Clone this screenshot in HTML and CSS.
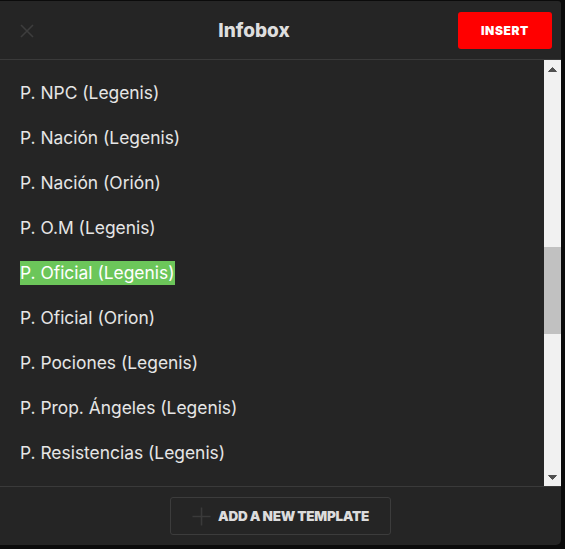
FILE: index.html
```html
<!DOCTYPE html>
<html>
<head>
<meta charset="utf-8">
<link rel="stylesheet" href="styles.css">
</head>
<body>
<div class="dialog">
  <div class="header">
    <div class="close">
      <svg width="14" height="14" viewBox="0 0 14 14"><path d="M1 1L13 13M13 1L1 13" stroke="#3d3d3d" stroke-width="1.6"/></svg>
    </div>
    <div class="title">Infobox</div>
    <button class="insert">INSERT</button>
  </div>
  <div class="body">
    <ul class="list">
      <li>P. NPC (Legenis)</li>
      <li>P. Nación (Legenis)</li>
      <li>P. Nación (Orión)</li>
      <li>P. O.M (Legenis)</li>
      <li><span class="sel">P. Oficial (Legenis)</span></li>
      <li>P. Oficial (Orion)</li>
      <li>P. Pociones (Legenis)</li>
      <li>P. Prop. Ángeles (Legenis)</li>
      <li>P. Resistencias (Legenis)</li>
    </ul>
    <div class="scrollbar">
      <div class="arrow"><svg width="9" height="6" viewBox="0 0 9 6"><path d="M0.5 5.5L4.5 1.5L8.5 5.5Z" fill="#505050" stroke="#505050"/></svg></div>
      <div class="track"><div class="thumb"></div></div>
      <div class="arrow"><svg width="9" height="6" viewBox="0 0 9 6"><path d="M0.5 0.5L4.5 4.5L8.5 0.5Z" fill="#505050" stroke="#505050"/></svg></div>
    </div>
  </div>
  <div class="footer">
    <button class="add">
      <svg width="19" height="19" viewBox="0 0 19 19"><path d="M9.5 0.5V18.5M0.5 9.5H18.5" stroke="#3a3a3a" stroke-width="1.6"/></svg>
      <span>ADD A NEW TEMPLATE</span>
    </button>
  </div>
</div>
</body>
</html>
```
FILE: styles.css
```css
html, body { margin: 0; padding: 0; }
body {
  background: #0b0b0b;
  width: 565px;
  height: 549px;
  overflow: hidden;
  font-family: "Inter", "Open Sans", sans-serif;
}
.dialog {
  margin-top: 1px;
  width: 561px;
  height: 544px;
  background: #252525;
  border-radius: 0 3px 5px 0;
  display: flex;
  flex-direction: column;
  overflow: hidden;
}
.header {
  height: 58px;
  flex: none;
  border-bottom: 1px solid #3a3a3a;
  display: flex;
  align-items: center;
  padding: 0 9px 0 20px;
}
.close { width: 14px; height: 14px; display: flex; margin-top: 1px; }
.title {
  flex: 1;
  text-align: center;
  color: #dedede;
  font-size: 19px;
  font-weight: 800;
  padding-left: 16px;
  margin-top: 1px;
}
.insert {
  width: 94px;
  height: 37px;
  background: #ff0000;
  border: none;
  border-radius: 3px;
  color: #fff;
  font-family: "Inter", sans-serif;
  font-weight: 900;
  font-size: 12px;
  letter-spacing: 0.6px;
  margin-top: 1px;
}
.body {
  flex: 1;
  display: flex;
  min-height: 0;
}
.list {
  list-style: none;
  margin: 0;
  padding: 10px 0 0 20px;
  flex: 1;
  overflow: hidden;
}
.list li {
  height: 45px;
  line-height: 45px;
  color: #e6e6e6;
  font-size: 17.4px;
  white-space: nowrap;
}
.sel {
  background: #6cc65a;
  color: #fff;
  padding: 1px 0 2px;
}
.scrollbar {
  width: 17px;
  background: #f1f1f1;
  display: flex;
  flex-direction: column;
}
.arrow {
  height: 17px;
  display: flex;
  align-items: center;
  justify-content: center;
}
.track { flex: 1; padding-top: 170px; }
.thumb { height: 87px; background: #c1c1c1; }
.footer {
  height: 59px;
  flex: none;
  border-top: 1px solid #3a3a3a;
  display: flex;
  justify-content: center;
  align-items: flex-start;
  padding-top: 10px;
  box-sizing: border-box;
}
.add {
  width: 221px;
  height: 38px;
  background: transparent;
  border: 1px solid #3c3c3c;
  border-radius: 3px;
  display: flex;
  align-items: center;
  justify-content: center;
  gap: 7px;
  color: #dcdcdc;
  font-family: "Inter", sans-serif;
  font-weight: 900;
  font-size: 13.5px;
  letter-spacing: -0.3px;
}
```
